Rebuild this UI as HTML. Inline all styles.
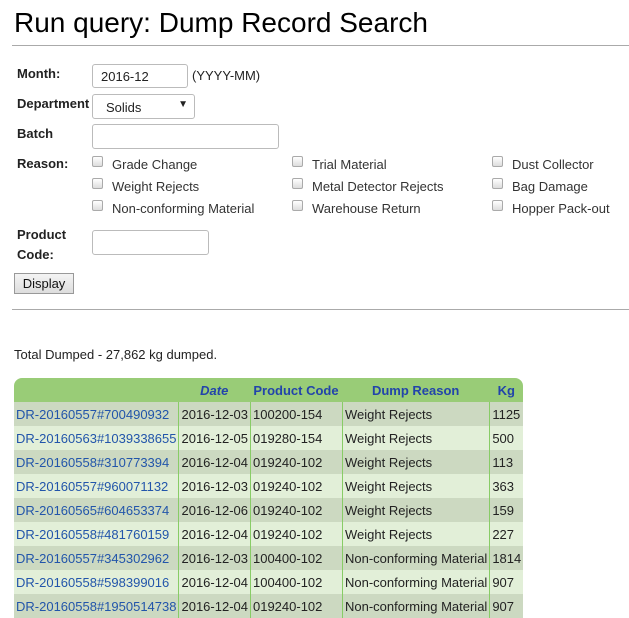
<!DOCTYPE html>
<html><head><style>
body{margin:0;width:629px;height:615px;overflow:hidden;background:#fff;font-family:"Liberation Sans",Arial,sans-serif;font-size:13px;color:#222;position:relative}
.a{position:absolute;white-space:nowrap}
h1{position:absolute;left:14px;top:7px;margin:0;font-weight:normal;font-size:28px;color:#000}
.hr{position:absolute;left:12px;width:617px;height:1px;background:#aaa}
.lb{font-weight:bold;font-size:13px;color:#222}
.in{position:absolute;border:1px solid #bbb;border-radius:3px;background:#fff;box-sizing:border-box}
.cb{position:absolute;width:11px;height:11px;border:1px solid #aaa;border-radius:2px;background:linear-gradient(#fff,#ddd);box-sizing:border-box}
.ct{color:#333}
table{position:absolute;left:14px;top:378px;border-collapse:separate;border-spacing:0;font-size:13px}
th{background:#99cc77;color:#2244aa;height:24px;padding:0 3px;font-size:13px}
th:first-child{border-top-left-radius:8px}
th:last-child{border-top-right-radius:8px}
td{height:24px;padding:0 2px;border-left:1px solid #88cc66;white-space:nowrap;color:#222}
td:first-child{border-left:none;color:#2255aa}
tr:nth-child(odd) td{background:#e2efd8}
tr:nth-child(even) td{background:#ccd9c1}
</style></head><body>
<h1>Run query: Dump Record Search</h1>
<div class="hr" style="top:45px"></div>

<div class="a lb" style="left:17px;top:66px">Month:</div>
<div class="in" style="left:92px;top:64px;width:96px;height:24px;padding:4px 8px">2016-12</div>
<div class="a" style="left:192px;top:68px">(YYYY-MM)</div>

<div class="a lb" style="left:17px;top:96px">Department</div>
<div class="in" style="left:92px;top:94px;width:103px;height:25px;padding:5px 13px">Solids<span style="position:absolute;right:6px;top:4px;font-size:10px">▼</span></div>

<div class="a lb" style="left:17px;top:126px">Batch</div>
<div class="in" style="left:92px;top:124px;width:187px;height:25px"></div>

<div class="a lb" style="left:17px;top:156px">Reason:</div>
<div class="cb" style="left:92px;top:156px"></div><div class="a ct" style="left:112px;top:157px">Grade Change</div>
<div class="cb" style="left:92px;top:178px"></div><div class="a ct" style="left:112px;top:179px">Weight Rejects</div>
<div class="cb" style="left:92px;top:200px"></div><div class="a ct" style="left:112px;top:201px">Non-conforming Material</div>
<div class="cb" style="left:292px;top:156px"></div><div class="a ct" style="left:312px;top:157px">Trial Material</div>
<div class="cb" style="left:292px;top:178px"></div><div class="a ct" style="left:312px;top:179px">Metal Detector Rejects</div>
<div class="cb" style="left:292px;top:200px"></div><div class="a ct" style="left:312px;top:201px">Warehouse Return</div>
<div class="cb" style="left:492px;top:156px"></div><div class="a ct" style="left:512px;top:157px">Dust Collector</div>
<div class="cb" style="left:492px;top:178px"></div><div class="a ct" style="left:512px;top:179px">Bag Damage</div>
<div class="cb" style="left:492px;top:200px"></div><div class="a ct" style="left:512px;top:201px">Hopper Pack-out</div>

<div class="a lb" style="left:17px;top:225px;line-height:20px">Product<br>Code:</div>
<div class="in" style="left:92px;top:230px;width:117px;height:25px"></div>

<div class="a" style="left:14px;top:273px;width:60px;height:21px;border:1px solid #999;background:linear-gradient(#f4f4f4,#ddd);box-sizing:border-box;text-align:center;line-height:19px;color:#111">Display</div>

<div class="hr" style="top:309px"></div>
<div class="a" style="left:14px;top:347px;color:#222">Total Dumped - 27,862 kg dumped.</div>

<table>
<tr><th style="width:154px"></th><th style="width:64px;font-style:italic">Date</th><th style="width:86px">Product Code</th><th style="width:140px">Dump Reason</th><th style="width:28px">Kg</th></tr>
<tr><td>DR-20160557#700490932</td><td>2016-12-03</td><td>100200-154</td><td>Weight Rejects</td><td>1125</td></tr>
<tr><td>DR-20160563#1039338655</td><td>2016-12-05</td><td>019280-154</td><td>Weight Rejects</td><td>500</td></tr>
<tr><td>DR-20160558#310773394</td><td>2016-12-04</td><td>019240-102</td><td>Weight Rejects</td><td>113</td></tr>
<tr><td>DR-20160557#960071132</td><td>2016-12-03</td><td>019240-102</td><td>Weight Rejects</td><td>363</td></tr>
<tr><td>DR-20160565#604653374</td><td>2016-12-06</td><td>019240-102</td><td>Weight Rejects</td><td>159</td></tr>
<tr><td>DR-20160558#481760159</td><td>2016-12-04</td><td>019240-102</td><td>Weight Rejects</td><td>227</td></tr>
<tr><td>DR-20160557#345302962</td><td>2016-12-03</td><td>100400-102</td><td>Non-conforming Material</td><td>1814</td></tr>
<tr><td>DR-20160558#598399016</td><td>2016-12-04</td><td>100400-102</td><td>Non-conforming Material</td><td>907</td></tr>
<tr><td>DR-20160558#1950514738</td><td>2016-12-04</td><td>019240-102</td><td>Non-conforming Material</td><td>907</td></tr>
</table>
</body></html>
